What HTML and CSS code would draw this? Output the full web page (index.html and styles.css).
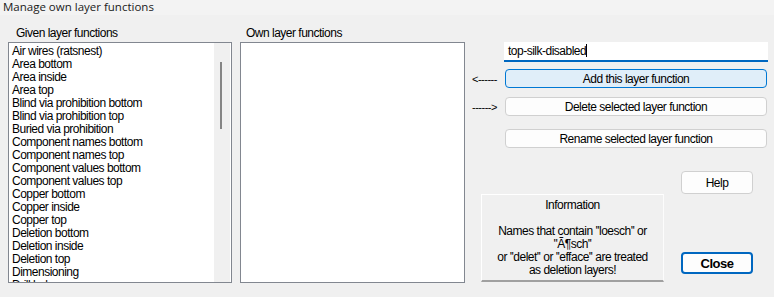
FILE: index.html
```html
<!DOCTYPE html>
<html lang="en">
<head>
  <meta charset="UTF-8">
  <title>Manage own layer functions</title>
  <link rel="stylesheet" href="styles.css">
</head>
<body>
  <div class="titlebar">Manage own layer functions</div>
  <div class="dialog">
    <div class="column given">
      <div class="label">Given layer functions</div>
      <div class="listbox">
        <ul class="items">
          <li>Air wires (ratsnest)</li>
          <li>Area bottom</li>
          <li>Area inside</li>
          <li>Area top</li>
          <li>Blind via prohibition bottom</li>
          <li>Blind via prohibition top</li>
          <li>Buried via prohibition</li>
          <li>Component names bottom</li>
          <li>Component names top</li>
          <li>Component values bottom</li>
          <li>Component values top</li>
          <li>Copper bottom</li>
          <li>Copper inside</li>
          <li>Copper top</li>
          <li>Deletion bottom</li>
          <li>Deletion inside</li>
          <li>Deletion top</li>
          <li>Dimensioning</li>
          <li>Drill holes</li>
        </ul>
        <div class="scrollbar"><div class="thumb"></div></div>
      </div>
    </div>
    <div class="column own">
      <div class="label">Own layer functions</div>
      <div class="listbox"></div>
    </div>
    <div class="actions">
      <div class="name-input">top-silk-disabled<span class="caret"></span></div>
      <div class="row add-row">
        <span class="arrow">&lt;------</span>
        <button class="btn active">Add this layer function</button>
      </div>
      <div class="row">
        <span class="arrow">------&gt;</span>
        <button class="btn">Delete selected layer function</button>
      </div>
      <div class="row rename-row">
        <span class="arrow"></span>
        <button class="btn">Rename selected layer function</button>
      </div>
      <div class="lower">
        <div class="info">
          <div>Information</div>
          <div>&nbsp;</div>
          <div>Names that contain ''loesch'' or</div>
          <div>''Ã¶sch''</div>
          <div>or ''delet'' or ''efface'' are treated</div>
          <div>as deletion layers!</div>
        </div>
        <div class="side-buttons">
          <button class="btn small">Help</button>
          <button class="btn small close">Close</button>
        </div>
      </div>
    </div>
  </div>
</body>
</html>
```

FILE: styles.css
```css
body { margin: 0; background-color: #f0f0f0; font-family: "Liberation Sans", Arial, sans-serif; font-size: 12px; letter-spacing: -0.5px; color: #000; height: 297px; overflow: hidden; }
.titlebar { height: 15px; background-color: #f3f3f3; font-family: "Open Sans", "Liberation Sans", sans-serif; font-size: 11.5px; letter-spacing: 0; line-height: 13px; padding-left: 3px; color: #1a1a1a; }
.dialog { display: flex; padding: 11px 0 0 8px; }
.column { display: flex; flex-direction: column; }
.label { height: 16px; line-height: 14px; padding-left: 8px; }
.listbox { box-sizing: border-box; height: 241px; background-color: #fff; border: 1px solid #828790; position: relative; overflow: hidden; }
.given .listbox { width: 224px; }
.own { margin-left: 8px; }
.own .label { padding-left: 6px; }
.own .listbox { width: 225px; }
.items { list-style: none; margin: 0; padding: 2px 0 0 3px; }
.items li { height: 13px; line-height: 13px; white-space: nowrap; }
.scrollbar { position: absolute; top: 0; right: 1px; bottom: 0; width: 16px; background-color: #f0f0f0; }
.thumb { position: absolute; left: 6px; top: 19px; width: 2px; height: 67px; background-color: #858585; }
.actions { margin-left: 7px; width: 296px; display: flex; flex-direction: column; }
.name-input { box-sizing: border-box; margin: 16px 0 0 32px; width: 264px; height: 20px; background-color: #fff; border-bottom: 2px solid #0067c0; padding: 2px 0 0 4px; line-height: 14px; }
.caret { display: inline-block; width: 1px; height: 13px; background-color: #000; vertical-align: -2px; }
.row { display: flex; align-items: center; margin-top: 7px; }
.row + .row { margin-top: 9px; }
.row.rename-row { margin-top: 13px; }
.arrow { width: 33px; font-size: 11px; letter-spacing: -0.5px; padding-top: 1px; }
.btn { box-sizing: border-box; width: 262px; height: 19px; padding: 0; font-family: inherit; font-size: 12px; letter-spacing: -0.5px; color: #000; background-color: #fdfdfd; border: 1px solid #d0d0d0; border-radius: 4px; }
.btn.active { background-color: #e0eef9; border-color: #0078d4; }
.lower { display: flex; margin-top: 23px; }
.info { box-sizing: border-box; margin: 23px 0 0 9px; width: 183px; height: 88px; border: 1px solid #fff; border-bottom: 2px solid #a0a0a0; border-right-color: #fcfcfc; text-align: center; line-height: 13px; padding-top: 4px; white-space: nowrap; }
.side-buttons { display: flex; flex-direction: column; margin-left: 17px; }
.btn.small { width: 72px; height: 23px; }
.btn.close { height: 22px; margin-top: 58px; font-size: 13px; font-weight: bold; border: 2px solid #0067c0; }
```
